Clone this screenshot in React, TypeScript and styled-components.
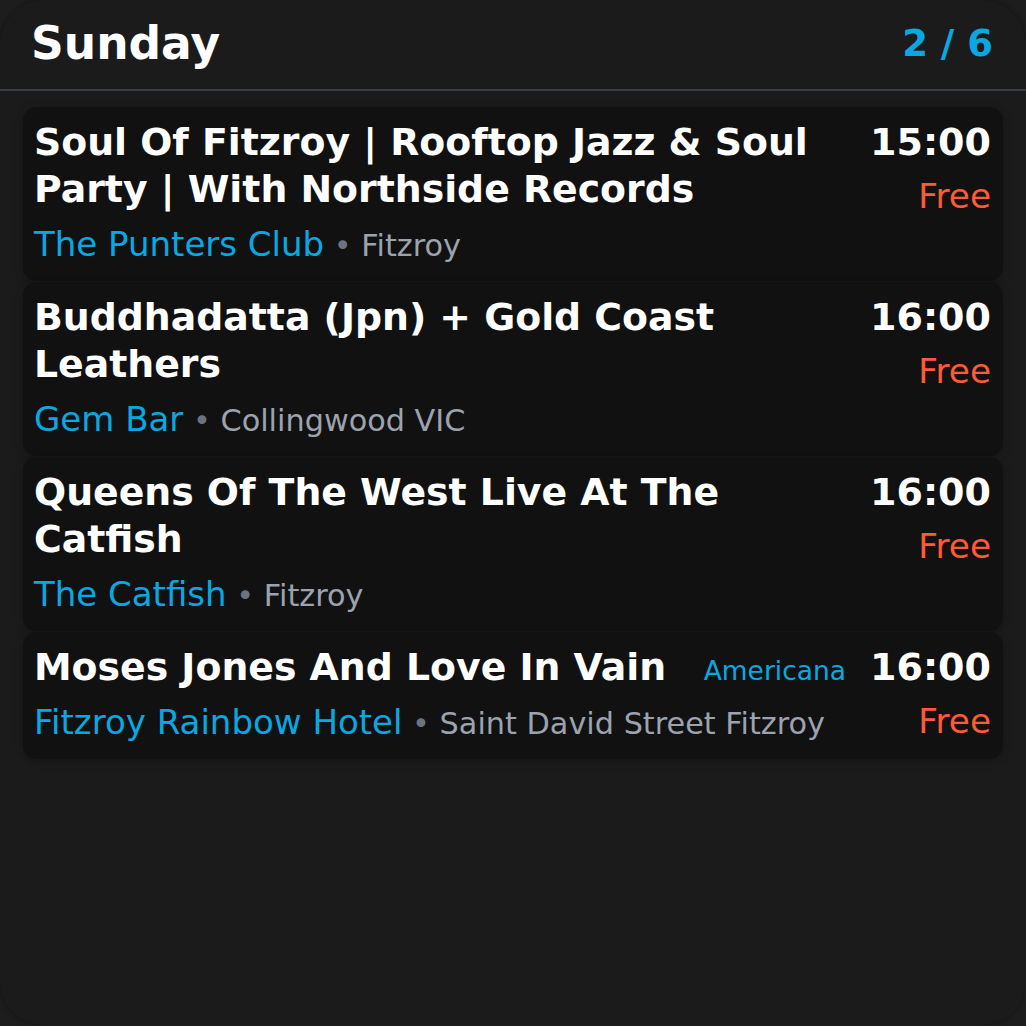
import React from "react";
import styled, { createGlobalStyle } from "styled-components";

const GlobalStyle = createGlobalStyle`
  html, body {
    margin: 0;
    padding: 0;
    background: #1d1d1d;
    font-family: "DejaVu Sans", "Liberation Sans", sans-serif;
  }
  * { box-sizing: border-box; }
`;

const Frame = styled.div`
  width: 1026px;
  height: 1026px;
  background: #1b1b1b;
  border-radius: 44px;
  box-shadow: 0 0 4px rgba(0, 0, 0, 0.35);
  overflow: hidden;
  display: flex;
  flex-direction: column;
`;

const Header = styled.header`
  height: 91px;
  display: flex;
  align-items: center;
  justify-content: space-between;
  padding: 0 33px 0 31px;
  border-bottom: 2px solid #383d47;
`;

const DayTitle = styled.h1`
  margin: 0;
  font-size: 45.5px;
  font-weight: 700;
  color: #ffffff;
  line-height: 1.2;
`;

const Counter = styled.div`
  font-size: 37px;
  font-weight: 700;
  color: #0aa8e0;
  line-height: 1.2;
`;

const List = styled.div`
  display: flex;
  flex-direction: column;
  gap: 1px;
  padding: 16px 23px;
`;

const Card = styled.div`
  display: flex;
  gap: 24px;
  padding: 12px 12px 12px 11px;
  background: #111111;
  border-radius: 14px;
  box-shadow: 0 2px 8px rgba(0, 0, 0, 0.25);
`;

const Main = styled.div`
  flex: 1;
  min-width: 0;
  display: flex;
  flex-direction: column;
  gap: 6px;
`;

const TitleRow = styled.div`
  display: flex;
  align-items: baseline;
  justify-content: space-between;
  gap: 16px;
`;

const Title = styled.div`
  font-size: 37.8px;
  font-weight: 700;
  line-height: 47px;
  color: #ffffff;
`;

const Genre = styled.span`
  font-size: 26.5px;
  color: #0aa8e0;
  white-space: nowrap;
  flex-shrink: 0;
`;

const VenueLine = styled.div`
  font-size: 34px;
  line-height: 50px;
  height: 50px;
  color: #0aa8e0;
  white-space: nowrap;
`;

const Suburb = styled.span`
  font-size: 30.3px;
  line-height: 1;
  color: #9ca3af;
`;

const Dot = styled.span`
  color: #6b7280;
`;

const Side = styled.div`
  flex-shrink: 0;
  display: flex;
  flex-direction: column;
  align-items: flex-end;
  gap: 6px;
`;

const Time = styled.div`
  font-size: 38px;
  font-weight: 700;
  line-height: 47px;
  color: #ffffff;
`;

const Price = styled.div`
  font-size: 34.3px;
  line-height: 48px;
  color: #ff5a36;
`;

type EventItem = {
  title: string;
  genre?: string;
  venue: string;
  suburb: string;
  time: string;
  price: string;
};

const events: EventItem[] = [
  {
    title: "Soul Of Fitzroy | Rooftop Jazz & Soul Party | With Northside Records",
    venue: "The Punters Club",
    suburb: "Fitzroy",
    time: "15:00",
    price: "Free",
  },
  {
    title: "Buddhadatta (Jpn) + Gold Coast Leathers",
    venue: "Gem Bar",
    suburb: "Collingwood VIC",
    time: "16:00",
    price: "Free",
  },
  {
    title: "Queens Of The West Live At The Catfish",
    venue: "The Catfish",
    suburb: "Fitzroy",
    time: "16:00",
    price: "Free",
  },
  {
    title: "Moses Jones And Love In Vain",
    genre: "Americana",
    venue: "Fitzroy Rainbow Hotel",
    suburb: "Saint David Street Fitzroy",
    time: "16:00",
    price: "Free",
  },
];

export default function App() {
  return (
    <>
      <GlobalStyle />
      <Frame>
        <Header>
          <DayTitle>Sunday</DayTitle>
          <Counter>2 / 6</Counter>
        </Header>
        <List>
          {events.map((e, i) => (
            <Card key={i}>
              <Main>
                <TitleRow>
                  <Title>{e.title}</Title>
                  {e.genre && <Genre>{e.genre}</Genre>}
                </TitleRow>
                <VenueLine>
                  {e.venue}
                  <Suburb>
                    {" "}
                    <Dot>•</Dot> {e.suburb}
                  </Suburb>
                </VenueLine>
              </Main>
              <Side>
                <Time>{e.time}</Time>
                <Price>{e.price}</Price>
              </Side>
            </Card>
          ))}
        </List>
      </Frame>
    </>
  );
}
